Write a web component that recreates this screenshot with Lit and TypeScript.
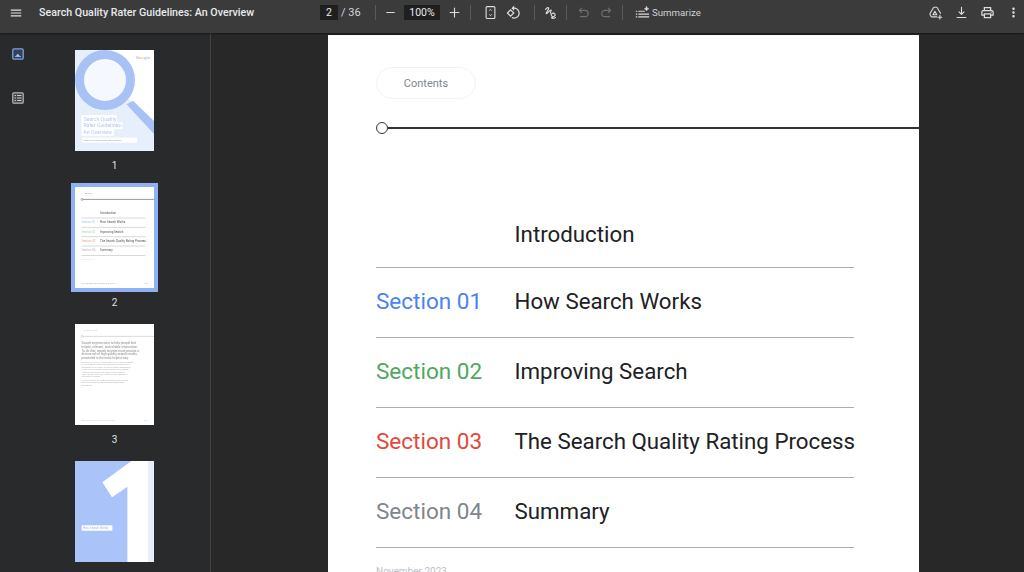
import { LitElement, html, css, svg } from "lit";
import { customElement } from "lit/decorators.js";

const rows = [
  { sec: "", cls: "", title: "Introduction" },
  { sec: "Section 01", cls: "blue", title: "How Search Works" },
  { sec: "Section 02", cls: "green", title: "Improving Search" },
  { sec: "Section 03", cls: "red", title: "The Search Quality Rating Process" },
  { sec: "Section 04", cls: "grey", title: "Summary" },
];

const thumb1 = svg`
  <rect width="79" height="102" fill="#e8effc"/>
  <polygon points="30,0 79,0 79,72 55,50 30,30" fill="#fff"/>
  <circle cx="30" cy="30" r="25.5" fill="#f5f8ff" stroke="#a9c2f6" stroke-width="9"/>
  <polygon points="51.4,54.3 58,50.7 79,71 79,84" fill="#a9c2f6"/>
  <text x="61" y="9" font-size="4.4" font-weight="500"><tspan fill="#a5c0f5">G</tspan><tspan fill="#f0b0a8">o</tspan><tspan fill="#f5d98a">o</tspan><tspan fill="#a5c0f5">g</tspan><tspan fill="#a5d8b0">l</tspan><tspan fill="#f0b0a8">e</tspan></text>
  <rect x="6.4" y="65" width="35.6" height="7.4" fill="#fff"/>
  <rect x="6.4" y="72.3" width="41" height="6.8" fill="#fff"/>
  <rect x="6.4" y="79" width="32.3" height="6.8" fill="#fff"/>
  <text fill="#b3c9f7" font-size="5.2"><tspan x="8.4" y="70.6">Search Quality</tspan><tspan x="8.4" y="77.4">Rater Guidelines:</tspan><tspan x="8.4" y="84">An Overview</tspan></text>
  <rect x="7" y="87.7" width="55" height="5" fill="#fff"/>
  <text x="8.5" y="91" font-size="1.9" fill="#8d97b5">Based on the Search Quality Rater Guidelines</text>
`;

const thumb2 = svg`
  <rect width="79" height="102" fill="#fff"/>
  <rect x="6.5" y="4.4" width="13.2" height="4.2" rx="2.1" fill="none" stroke="#eee" stroke-width=".4"/>
  <text x="10" y="7.2" font-size="1.7" fill="#9aa0a6">Contents</text>
  <line x1="7" y1="12.4" x2="79" y2="12.4" stroke="#999" stroke-width="1"/>
  <circle cx="7" cy="12.4" r="1" fill="#fff" stroke="#666" stroke-width=".5"/>
  ${[31, 40.4, 49.7, 59, 68.5].map(
    (y) => svg`<line x1="6.4" y1="${y}" x2="70.5" y2="${y}" stroke="#d8d8d8" stroke-width="1"/>`
  )}
  <text font-size="3" fill="#555"><tspan x="25" y="27">Introduction</tspan><tspan x="25" y="36.2">How Search Works</tspan><tspan x="25" y="45.5">Improving Search</tspan><tspan x="25" y="54.9">The Search Quality Rating Process</tspan><tspan x="25" y="64.2">Summary</tspan></text>
  <text font-size="3"><tspan x="6.4" y="36.2" fill="#a9c4f7">Section 01</tspan><tspan x="6.4" y="45.5" fill="#a5d5b0">Section 02</tspan><tspan x="6.4" y="54.9" fill="#f0a69e">Section 03</tspan><tspan x="6.4" y="64.2" fill="#bbb">Section 04</tspan></text>
  <text x="6.4" y="72.5" font-size="1.7" fill="#ddd">November 2023</text>
  <text x="6.4" y="96.6" font-size="1.7" fill="#aaa">Search Quality Rater Guidelines: An Overview</text>
  <text x="69" y="96.6" font-size="1.7" fill="#aaa">2/36</text>
`;

const thumb3 = svg`
  <rect width="79" height="102" fill="#fff"/>
  <text x="8" y="7.2" font-size="1.7" fill="#c4c4c4">How Search Works</text>
  <line x1="7" y1="12.4" x2="79" y2="12.4" stroke="#ccc" stroke-width=".7"/>
  <circle cx="7" cy="12.4" r="1" fill="#fff" stroke="#aaa" stroke-width=".4"/>
  <text font-size="3.1" fill="#8a8a8a"><tspan x="6.6" y="20.4">Search engines exist to help people find</tspan><tspan x="6.6" y="24">helpful, relevant, and reliable information.</tspan><tspan x="6.6" y="27.7">To do that, search engines must provide a</tspan><tspan x="6.6" y="31.3">diverse set of high quality search results,</tspan><tspan x="6.6" y="35">presented in the most helpful way.</tspan></text>
  <text font-size="1.95" fill="#b0b0b0"><tspan x="6.6" y="39">At Google, we like to say that Search is not a solved problem.</tspan><tspan x="6.6" y="41.4">We're constantly making improvements to make Search</tspan><tspan x="6.6" y="43.8">work better for our users. We use structured experiments</tspan><tspan x="6.6" y="46.2">to see if these changes improve results. Search Quality</tspan><tspan x="6.6" y="48.6">This process is public and helps to inform how the</tspan><tspan x="6.6" y="51">Search Raters' info helps us measure how people find</tspan><tspan x="6.6" y="53.4">information in Search.</tspan><tspan x="6.6" y="57">In this document, we briefly explain how Search works</tspan><tspan x="6.6" y="59.4">and how we improve Search through these search</tspan><tspan x="6.6" y="61.8">experiments.</tspan></text>
  <text x="6.4" y="96.6" font-size="1.7" fill="#ccc">Search Quality Rater Guidelines: An Overview</text>
  <text x="69" y="96.6" font-size="1.7" fill="#ccc">3/36</text>
`;

const thumb4 = svg`
  <rect width="79" height="102" fill="#aac4f9"/>
  <rect x="73" width="6" height="102" fill="#e8effc"/>
  <polygon points="56.4,0 73,0 73,102 52.4,102 52.4,25.7 37,36.3 27.4,21.3" fill="#fff"/>
  <rect x="6.7" y="64.3" width="30.7" height="5.4" fill="#fff"/>
  <text x="8" y="68.2" font-size="3" fill="#9db8f2">How Search Works</text>
`;

const thumbs = [thumb1, thumb2, thumb3, thumb4];

@customElement("app-root")
export class AppRoot extends LitElement {
  static styles = css`
    :host {
      display: block;
      width: 1024px;
      height: 572px;
      overflow: hidden;
      background: #282828;
      font-family: "Roboto", "Liberation Sans", sans-serif;
    }
    svg { display: block; }
    .bar {
      position: relative;
      z-index: 2;
      height: 33px;
      box-sizing: border-box;
      padding-bottom: 8px;
      display: flex;
      align-items: center;
      background: #3b3b3b;
      box-shadow: 0 1px 2px rgba(0, 0, 0, 0.45);
      color: #e8eaed;
      font-size: 11px;
    }
    .left { width: 320px; flex: none; display: flex; align-items: center; }
    .menu { margin-left: 9px; width: 14px; height: 14px; fill: #e3e3e3; }
    .title { margin-left: 16px; font-weight: 500; font-size: 10.7px; white-space: nowrap; color: #e8eaed; }
    .ctr { display: flex; align-items: center; flex: none; }
    .box {
      height: 15px;
      background: #1f1f1f;
      display: flex;
      align-items: center;
      justify-content: center;
      font-size: 10.5px;
      color: #e8eaed;
    }
    .b-page { width: 18px; }
    .b-zoom { width: 36px; margin-left: 4px; }
    .total { width: 18px; margin-left: 3px; white-space: nowrap; color: #d5d7da; }
    .sep { width: 1px; height: 15px; background: #5a5a5a; flex: none; }
    .ic { width: 22px; height: 16px; display: flex; align-items: center; justify-content: center; flex: none; }
    .ic svg { width: 15px; height: 15px; fill: none; stroke: #dcdcdc; stroke-width: 1.8; stroke-linecap: round; stroke-linejoin: round; }
    .ic svg.f { fill: #dcdcdc; stroke: none; }
    .ic.dim svg { stroke: #6f6f6f; }
    .zb { width: 20px; margin-left: 4px; }
    .ml1 { margin-left: 1px; }
    .ml4 { margin-left: 4px; }
    .ml5 { margin-left: 5px; }
    .ml6 { margin-left: 6px; }
    .ml8 { margin-left: 8px; }
    .ml10 { margin-left: 10px; }
    .ml16 { margin-left: 16px; }
    .sumtext { margin-left: 1px; color: #d0d2d5; font-size: 9.7px; white-space: nowrap; }
    .sumic { width: 18px; }
    .right { margin-left: auto; padding-right: 2px; display: flex; gap: 8px; }
    .right .ic { width: 18px; }
    .right .ic svg { width: 15px; height: 15px; }
    .body { display: flex; height: 539px; }
    .side {
      width: 211px;
      flex: none;
      box-sizing: border-box;
      border-right: 1px solid #444;
      background: #292a2c;
      display: flex;
      overflow: hidden;
    }
    .rail { width: 35px; flex: none; padding-top: 15px; display: flex; flex-direction: column; align-items: center; gap: 32px; }
    .rail svg { width: 12px; height: 12px; }
    .tlist { width: 159px; flex: none; padding-top: 13px; display: flex; flex-direction: column; align-items: center; gap: 10px; }
    .titem { display: flex; flex-direction: column; align-items: center; flex: none; }
    .tframe { border: 4px solid transparent; width: 79px; height: 101px; }
    .tframe.sel { border-color: #8fb1f2; }
    .tframe svg { width: 79px; height: 101px; filter: blur(0.3px); font-family: "Roboto", sans-serif; }
    .tlabel { margin-top: 4px; height: 14px; line-height: 14px; font-size: 10px; color: #dfe1e4; }
    .main { flex: 1; padding: 2px 0 0 117px; overflow: hidden; }
    .page {
      width: 591px;
      height: 600px;
      box-sizing: border-box;
      background: #fff;
      padding-top: 32px;
      font-family: "Roboto", "Noto Sans", sans-serif;
    }
    .pill {
      margin-left: 48px;
      width: 100px;
      height: 32px;
      box-sizing: border-box;
      border: 1px solid #f1f3f4;
      border-radius: 16px;
      display: flex;
      align-items: center;
      justify-content: center;
      font-size: 11px;
      color: #80868b;
    }
    .time { margin: 23px 0 0 48px; display: flex; align-items: center; height: 12px; }
    .dot { width: 12px; height: 12px; box-sizing: border-box; border: 1.8px solid #333; border-radius: 50%; flex: none; }
    .tl { flex: 1; height: 1.6px; background: #333; }
    .rows { margin: 64px 65px 0 48px; }
    .row {
      height: 70px;
      box-sizing: border-box;
      border-bottom: 1px solid #adadb2;
      padding-bottom: 4px;
      display: flex;
      align-items: center;
      white-space: nowrap;
    }
    .row.first { padding: 2px 0 0; }
    .sec { width: 138.5px; flex: none; font-size: 22.5px; }
    .blue { color: #4a82f0; }
    .green { color: #4ea85f; }
    .red { color: #e2493c; }
    .grey { color: #80868b; }
    .ttl { color: #202124; font-size: 22.3px; }
    .date { margin: 18px 0 0 48px; font-size: 10px; color: #bdc1c6; }
  `;

  render() {
    return html`
      <div class="bar">
        <div class="left">
          <svg class="menu" viewBox="0 0 24 24"><path d="M3 18h18v-2H3v2zm0-5h18v-2H3v2zm0-7v2h18V6H3z"/></svg>
          <span class="title">Search Quality Rater Guidelines: An Overview</span>
        </div>
        <div class="ctr">
          <div class="box b-page">2</div>
          <span class="total">/ 36</span>
          <div class="sep ml16"></div>
          <div class="ic zb"><svg viewBox="0 0 24 24"><path d="M6 12h12"/></svg></div>
          <div class="box b-zoom">100%</div>
          <div class="ic zb"><svg viewBox="0 0 24 24"><path d="M5 12h14M12 5v14"/></svg></div>
          <div class="sep ml6"></div>
          <div class="ic ml8"><svg viewBox="0 0 24 24"><rect x="5" y="2.5" width="14" height="19" rx="1.5"/><path d="M10.5 8.500L12 7l1.500 1.500M10.500 15.500L12 17l1.500-1.500" stroke-width="1.6"/></svg></div>
          <div class="ic ml1"><svg class="f" viewBox="0 0 24 24"><path d="M7.34 6.41L.86 12.9l6.49 6.48 6.49-6.48-6.5-6.49zM3.69 12.9l3.66-3.66L11 12.9l-3.66 3.66-3.65-3.66zm15.67-6.26C17.61 4.88 15.3 4 13 4V.76L8.76 5 13 9.24V6c1.79 0 3.58.68 4.95 2.05 2.73 2.73 2.73 7.17 0 9.9C16.58 19.32 14.79 20 13 20c-.97 0-1.94-.21-2.84-.61l-1.49 1.49C10.02 21.62 11.51 22 13 22c2.3 0 4.61-.88 6.36-2.64 3.52-3.51 3.52-9.21 0-12.72z"/></svg></div>
          <div class="sep ml10"></div>
          <div class="ic ml4"><svg viewBox="0 0 24 24"><path d="M4 7c2-3 6-4 5-1-1 3-5 7-4 8 2 1 6-7 8-6 1 1-2 4-1 5" stroke-width="1.8"/><path d="M15 18c-3 0-2-5 1-5s5 3 2 5-5 2-4 3 4 0 6-1" stroke-width="1.8"/></svg></div>
          <div class="sep ml5"></div>
          <div class="ic dim ml5"><svg viewBox="0 0 24 24"><path d="M9 5L5.500 8.500 9 12M6 8.500h8.500a5 5 0 0 1 0 10H7"/></svg></div>
          <div class="ic dim ml1"><svg viewBox="0 0 24 24"><path d="M15 5l3.500 3.500L15 12M18 8.500H9.500a5 5 0 0 0 0 10H17"/></svg></div>
          <div class="sep ml5"></div>
          <div class="ic sumic ml10"><svg viewBox="0 0 24 24"><path d="M2 10h1M6 10h9M2 14.500h1M6 14.500h16M2 19h1M6 19h16"/><path d="M18.500 2.500l1 2.500 2.500 1-2.500 1-1 2.500-1-2.500-2.500-1 2.500-1z" fill="#dcdcdc" stroke-width="1"/></svg></div>
          <span class="sumtext">Summarize</span>
        </div>
        <div class="right">
          <div class="ic"><svg viewBox="0 0 24 24"><path d="M10 3.500h3.500c.6 0 1 .3 1.300.8l5.200 9M10 3.500c-.6 0-1 .3-1.300.8L3.300 13.500c-.4.600-.4 1.200 0 1.800l1.700 3c.3.500.8.700 1.400.7H14M8 15.500h6l-3-5.500z" stroke-width="1.8"/><path d="M19 16.500v6M16 19.500h6" stroke-width="1.8"/></svg></div>
          <div class="ic"><svg viewBox="0 0 24 24"><path d="M12 3.500v11M8 11l4 4 4-4M5 20h14"/></svg></div>
          <div class="ic"><svg class="f" viewBox="0 0 24 24"><path d="M19 8h-1V3H6v5H5c-1.660 0-3 1.340-3 3v6h4v4h12v-4h4v-6c0-1.660-1.340-3-3-3zM8 5h8v3H8V5zm8 12v2H8v-4h8v2zm2-2v-2H6v2H4v-4c0-.550.450-1 1-1h14c.550 0 1 .450 1 1v4h-2z"/><circle cx="18" cy="11.500" r="1"/></svg></div>
          <div class="ic"><svg class="f" viewBox="0 0 24 24"><path d="M12 8c1.100 0 2-.900 2-2s-.900-2-2-2-2 .900-2 2 .900 2 2 2zm0 2c-1.100 0-2 .900-2 2s.900 2 2 2 2-.900 2-2-.900-2-2-2zm0 6c-1.100 0-2 .900-2 2s.900 2 2 2 2-.900 2-2-.900-2-2-2z"/></svg></div>
        </div>
      </div>
      <div class="body">
        <div class="side">
          <div class="rail">
            <svg viewBox="0 0 12 12"><rect x=".8" y=".8" width="10.400" height="10.400" rx="1.200" fill="#34405a" stroke="#7d9fe0" stroke-width="1.300"/><path d="M3 8.500h6M4.500 8l1.300-2 1.300 2z" stroke="#a8c4f5" stroke-width=".8" fill="#a8c4f5"/></svg>
            <svg viewBox="0 0 12 12"><rect x=".8" y=".8" width="10.400" height="10.400" rx="1" fill="#444" stroke="#b8b8b8" stroke-width="1.200"/><path d="M2.500 3.500h1.500M5 3.500h4.500M2.500 6h1.500M5 6h4.500M2.500 8.500h1.500M5 8.500h4.500" stroke="#c8c8c8" stroke-width="1"/></svg>
          </div>
          <div class="tlist">
            ${thumbs.map(
              (t, i) => html`
                <div class="titem">
                  <div class="tframe ${i === 1 ? "sel" : ""}"><svg viewBox="0 0 79 101">${t}</svg></div>
                  ${i < 3 ? html`<div class="tlabel">${i + 1}</div>` : ""}
                </div>
              `
            )}
          </div>
        </div>
        <div class="main">
          <div class="page">
            <div class="pill">Contents</div>
            <div class="time"><div class="dot"></div><div class="tl"></div></div>
            <div class="rows">
              ${rows.map(
                (r, i) => html`
                  <div class="row ${i === 0 ? "first" : ""}">
                    <span class="sec ${r.cls}">${r.sec}</span>
                    <span class="ttl">${r.title}</span>
                  </div>
                `
              )}
            </div>
            <div class="date">November 2023</div>
          </div>
        </div>
      </div>
    `;
  }
}
